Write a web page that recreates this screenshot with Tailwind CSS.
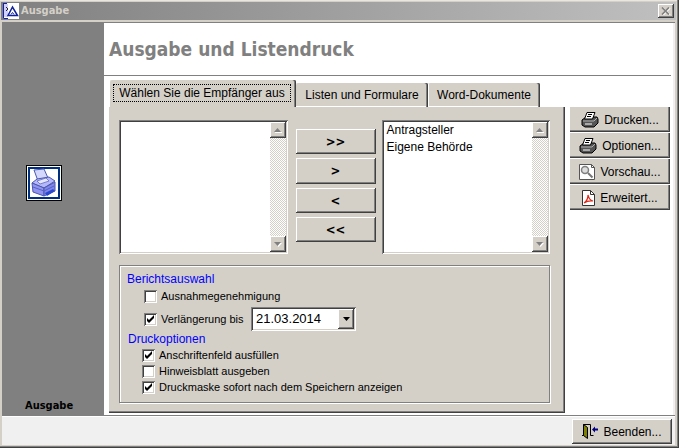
<!DOCTYPE html>
<html lang="de">
<head>
    <meta charset="UTF-8">
    <meta name="viewport" content="width=device-width, initial-scale=1.0">
    <title>Ausgabe</title>
    <script src="https://cdn.jsdelivr.net/npm/@tailwindcss/browser@4"></script>
</head>
<body class="font-['Liberation_Sans',Arial,sans-serif] text-[12px] leading-4 text-black">
    <div class="min-h-screen flex flex-col bg-[#d4d0c8] pt-0.5 pl-px pr-[3px] pb-[3px] shadow-[inset_-1px_-1px_#404040,inset_-2px_-2px_#808080,inset_0_1px_#e8e6e0]">

        <!-- Titelleiste -->
        <div class="h-[18px] flex items-center bg-linear-to-r from-[#808080] to-[#c0c0c0] pl-0.5 pr-0.5">
            <svg class="size-4 shrink-0" viewBox="0 0 16 16">
                <path d="M0 0h16v16H0z" fill="#fff"/>
                <path d="M1 1h4v13H1z" fill="#d0d0ff"/>
                <path d="M.5 0v15.500H5M0 .5h4" fill="none" stroke="#1020b0"/>
                <path d="M3 4l2 2-2 2" fill="none" stroke="#222"/>
                <path d="M5 12.500L9.500 4l5 8.500z" fill="none" stroke="#10209c" stroke-width="1.500"/>
                <path d="M8 11.500l1.500-2 1.500 2" fill="none" stroke="#10209c"/>
            </svg>
            <span class="flex-1 pl-0.5 font-['DejaVu_Sans_Condensed','DejaVu_Sans',sans-serif] font-bold text-[11px] text-[#d4d0c8]">Ausgabe</span>
            <button aria-label="Schließen" class="w-4 h-3.5 grid place-items-center bg-[#d4d0c8] shadow-[inset_-1px_-1px_#404040,inset_1px_1px_#fff,inset_-2px_-2px_#808080]">
                <svg class="w-2.5 h-2" viewBox="0 0 10 8">
                    <path d="M2 1l7 7M9 1L2 8" stroke="#fff" stroke-width="1.500"/>
                    <path d="M1 .5l7 7M8 .5l-7 7" stroke="#808080" stroke-width="1.700"/>
                </svg>
            </button>
        </div>

        <div class="flex-1 flex flex-col mt-0.5 ml-px mr-px bg-[#f0f0f0] border-t border-[#808080]">
            <div class="flex-1 flex">
                <!-- Seitenleiste -->
                <aside class="w-[102px] shrink-0 flex flex-col items-start pl-6 bg-[#808080] pt-[142px] pb-px">
                    <svg class="size-9" viewBox="0 0 36 36">
                        <path d="M0 0h36v36H0z" fill="#000"/>
                        <path d="M1 1h34v34H1z" fill="#fff"/>
                        <path d="M2 2h32v32H2z" fill="#003080"/>
                        <path d="M4 4h28v28H4z" fill="#fff"/>
                        <path d="M8 5l10-1 4 9-10 3z" fill="#d4d8ff" stroke="#4a58ac"/>
                        <path d="M6 18l5-4 12-2 6 4-11 7z" fill="#b4b8fa" stroke="#4a58ac"/>
                        <path d="M11 16l9-3 3 3-9 3z" fill="#e4e6ff" stroke="#5360b4" stroke-width=".7"/>
                        <path d="M6 18l12 5v8L7 27z" fill="#8f94f0" stroke="#4a58ac"/>
                        <path d="M18 23l11-6v9l-11 5z" fill="#7f85ea" stroke="#4a58ac"/>
                        <path d="M19 28l8-4 2 2-8 5z" fill="#2848d0"/>
                        <path d="M7 22l11 4 10-5" fill="none" stroke="#5562c4"/>
                    </svg>
                    <span class="mt-auto -ml-px font-['DejaVu_Sans_Condensed','DejaVu_Sans',sans-serif] font-bold text-[11px]">Ausgabe</span>
                </aside>

                <main class="flex-1 flex flex-col bg-white mr-0.5 pr-0.5">
                    <h1 class="h-[53px] flex items-center pl-[5px] border-b border-[#808080] font-['DejaVu_Sans_Condensed','DejaVu_Sans',sans-serif] font-bold text-[19px] text-[#808080]">Ausgabe und Listendruck</h1>

                    <div class="flex-1 flex gap-[5px] pl-[5px] pt-1 pb-0.5">
                        <div class="flex-1 flex flex-col">
                            <!-- Register -->
                            <div role="tablist" class="flex items-end pl-px">
                                <button role="tab" aria-selected="true" class="w-[186px] h-[27px] pl-[3px] pr-[5px] flex items-start pt-1 bg-[#d4d0c8] rounded-t-xs shadow-[inset_-1px_0_#404040,inset_-2px_0_#808080]"><span class="flex-1 border border-dotted border-black whitespace-nowrap">Wählen Sie die Empfänger aus</span></button>
                                <button role="tab" aria-selected="false" class="w-[132px] h-6 bg-[#d4d0c8] rounded-t-xs whitespace-nowrap shadow-[inset_-1px_0_#404040,inset_-2px_0_#808080,inset_0_-1px_#fff]">Listen und Formulare</button>
                                <button role="tab" aria-selected="false" class="w-28 h-6 bg-[#d4d0c8] rounded-t-xs whitespace-nowrap shadow-[inset_-1px_0_#404040,inset_-2px_0_#808080,inset_1px_-1px_#fff]">Word-Dokumente</button>
                            </div>

                            <div role="tabpanel" class="flex-1 flex flex-col bg-[#d4d0c8] pt-[13px] pl-2.5 pr-[15px] pb-2.5 shadow-[inset_-1px_-1px_#404040,inset_-2px_-2px_#808080]">
                                <div class="flex h-[134px]">
                                    <div class="flex-1 flex p-0.5 bg-white shadow-[inset_1px_1px_#808080,inset_-1px_-1px_#fff,inset_2px_2px_#404040,inset_-2px_-2px_#d4d0c8]">
                                        <select multiple aria-label="Verfügbare Empfänger" class="flex-1 min-w-0 overflow-hidden outline-none bg-white"></select>
                                        <div class="w-4 flex flex-col justify-between bg-[repeating-conic-gradient(#fff_0_25%,#d4d0c8_0_50%)] bg-size-[2px_2px]">
                                            <button aria-label="Nach oben" class="size-4 grid place-items-center bg-[#d4d0c8] shadow-[inset_-1px_-1px_#404040,inset_1px_1px_#fff,inset_-2px_-2px_#808080]"><svg class="w-2 h-[5px]" viewBox="0 0 8 5"><path d="M1 4h7v1H1z" fill="#fff"/><path d="M0 4l3.500-4L7 4z" fill="#808080"/></svg></button>
                                            <button aria-label="Nach unten" class="size-4 grid place-items-center bg-[#d4d0c8] shadow-[inset_-1px_-1px_#404040,inset_1px_1px_#fff,inset_-2px_-2px_#808080]"><svg class="w-2 h-[5px]" viewBox="0 0 8 5"><path d="M1 1h7L4.500 5z" fill="#fff"/><path d="M0 0h7L3.500 4z" fill="#808080"/></svg></button>
                                        </div>
                                    </div>
                                    <div class="w-20 flex flex-col gap-1 ml-2 mr-1.5 pt-[9px] font-['DejaVu_Sans_Condensed','DejaVu_Sans',sans-serif] font-bold text-[13px]">
                                        <button class="h-[25px] shadow-[inset_-1px_-1px_#404040,inset_1px_1px_#fff,inset_-2px_-2px_#808080]">&gt;&gt;</button>
                                        <button class="h-[26px] shadow-[inset_-1px_-1px_#404040,inset_1px_1px_#fff,inset_-2px_-2px_#808080]">&gt;</button>
                                        <button class="h-[25px] shadow-[inset_-1px_-1px_#404040,inset_1px_1px_#fff,inset_-2px_-2px_#808080]">&lt;</button>
                                        <button class="h-[25px] shadow-[inset_-1px_-1px_#404040,inset_1px_1px_#fff,inset_-2px_-2px_#808080]">&lt;&lt;</button>
                                    </div>
                                    <div class="flex-1 flex p-0.5 bg-white shadow-[inset_1px_1px_#808080,inset_-1px_-1px_#fff,inset_2px_2px_#404040,inset_-2px_-2px_#d4d0c8]">
                                        <select multiple aria-label="Gewählte Empfänger" class="flex-1 min-w-0 overflow-hidden outline-none bg-white">
                                            <option class="h-[17px] p-0 pl-[3px] pt-px">Antragsteller</option>
                                            <option class="h-[17px] p-0 pl-[3px] pt-px">Eigene Behörde</option>
                                        </select>
                                        <div class="w-4 flex flex-col justify-between bg-[repeating-conic-gradient(#fff_0_25%,#d4d0c8_0_50%)] bg-size-[2px_2px]">
                                            <button aria-label="Nach oben" class="size-4 grid place-items-center bg-[#d4d0c8] shadow-[inset_-1px_-1px_#404040,inset_1px_1px_#fff,inset_-2px_-2px_#808080]"><svg class="w-2 h-[5px]" viewBox="0 0 8 5"><path d="M1 4h7v1H1z" fill="#fff"/><path d="M0 4l3.500-4L7 4z" fill="#808080"/></svg></button>
                                            <button aria-label="Nach unten" class="size-4 grid place-items-center bg-[#d4d0c8] shadow-[inset_-1px_-1px_#404040,inset_1px_1px_#fff,inset_-2px_-2px_#808080]"><svg class="w-2 h-[5px]" viewBox="0 0 8 5"><path d="M1 1h7L4.500 5z" fill="#fff"/><path d="M0 0h7L3.500 4z" fill="#808080"/></svg></button>
                                        </div>
                                    </div>
                                </div>

                                <!-- Optionen -->
                                <div class="flex-1 mt-[11px] pl-[7px] pt-[5px] border border-[#808080] shadow-[1px_1px_#fff,inset_1px_1px_#fff] text-[11px]">
                                    <h2 class="text-[12px] text-[#0000ff]">Berichtsauswahl</h2>
                                    <div class="h-[18px] flex items-center gap-1 pl-[17px]">
                                        <span class="grid size-[13px]">
                                            <input type="checkbox" id="ausnahme" class="peer appearance-none col-start-1 row-start-1 size-[13px] bg-white shadow-[inset_1px_1px_#808080,inset_-1px_-1px_#fff,inset_2px_2px_#404040,inset_-2px_-2px_#d4d0c8]">
                                            <svg class="hidden peer-checked:block pointer-events-none col-start-1 row-start-1 size-[13px]" viewBox="0 0 13 13"><path d="M3 5v3l2 2 5-5V2L5 7z"/></svg>
                                        </span>
                                        <label for="ausnahme">Ausnahmegenehmigung</label>
                                    </div>
                                    <div class="h-[26px] flex items-center gap-1 pl-[17px] pt-0.5">
                                        <span class="grid size-[13px]">
                                            <input type="checkbox" id="verlaengerung" checked class="peer appearance-none col-start-1 row-start-1 size-[13px] bg-white shadow-[inset_1px_1px_#808080,inset_-1px_-1px_#fff,inset_2px_2px_#404040,inset_-2px_-2px_#d4d0c8]">
                                            <svg class="hidden peer-checked:block pointer-events-none col-start-1 row-start-1 size-[13px]" viewBox="0 0 13 13"><path d="M3 5v3l2 2 5-5V2L5 7z"/></svg>
                                        </span>
                                        <label for="verlaengerung" class="w-[86px]">Verlängerung bis</label>
                                        <div class="grid w-[105px] h-6 items-center">
                                            <select aria-label="Datum" class="appearance-none col-start-1 row-start-1 w-full h-6 pl-[5px] bg-white outline-none text-[13px] shadow-[inset_1px_1px_#808080,inset_-1px_-1px_#fff,inset_2px_2px_#404040,inset_-2px_-2px_#d4d0c8]">
                                                <option>21.03.2014</option>
                                            </select>
                                            <span class="pointer-events-none col-start-1 row-start-1 justify-self-end mr-0.5 w-4 h-5 grid place-items-center bg-[#d4d0c8] shadow-[inset_-1px_-1px_#404040,inset_1px_1px_#fff,inset_-2px_-2px_#808080]"><svg class="w-[7px] h-1" viewBox="0 0 7 4"><path d="M0 0h7L3.500 4z"/></svg></span>
                                        </div>
                                    </div>
                                    <h2 class="pl-px text-[12px] text-[#0000ff]">Druckoptionen</h2>
                                    <div class="h-4 flex items-center gap-1 pl-[15px]">
                                        <span class="grid size-[13px]">
                                            <input type="checkbox" id="anschrift" checked class="peer appearance-none col-start-1 row-start-1 size-[13px] bg-white shadow-[inset_1px_1px_#808080,inset_-1px_-1px_#fff,inset_2px_2px_#404040,inset_-2px_-2px_#d4d0c8]">
                                            <svg class="hidden peer-checked:block pointer-events-none col-start-1 row-start-1 size-[13px]" viewBox="0 0 13 13"><path d="M3 5v3l2 2 5-5V2L5 7z"/></svg>
                                        </span>
                                        <label for="anschrift">Anschriftenfeld ausfüllen</label>
                                    </div>
                                    <div class="h-4 flex items-center gap-1 pl-[15px]">
                                        <span class="grid size-[13px]">
                                            <input type="checkbox" id="hinweis" class="peer appearance-none col-start-1 row-start-1 size-[13px] bg-white shadow-[inset_1px_1px_#808080,inset_-1px_-1px_#fff,inset_2px_2px_#404040,inset_-2px_-2px_#d4d0c8]">
                                            <svg class="hidden peer-checked:block pointer-events-none col-start-1 row-start-1 size-[13px]" viewBox="0 0 13 13"><path d="M3 5v3l2 2 5-5V2L5 7z"/></svg>
                                        </span>
                                        <label for="hinweis">Hinweisblatt ausgeben</label>
                                    </div>
                                    <div class="h-4 flex items-center gap-1 pl-[15px]">
                                        <span class="grid size-[13px]">
                                            <input type="checkbox" id="druckmaske" checked class="peer appearance-none col-start-1 row-start-1 size-[13px] bg-white shadow-[inset_1px_1px_#808080,inset_-1px_-1px_#fff,inset_2px_2px_#404040,inset_-2px_-2px_#d4d0c8]">
                                            <svg class="hidden peer-checked:block pointer-events-none col-start-1 row-start-1 size-[13px]" viewBox="0 0 13 13"><path d="M3 5v3l2 2 5-5V2L5 7z"/></svg>
                                        </span>
                                        <label for="druckmaske">Druckmaske sofort nach dem Speichern anzeigen</label>
                                    </div>
                                </div>
                            </div>
                        </div>

                        <!-- Aktionen -->
                        <div class="w-[100px] flex flex-col gap-px pt-[27px] mr-px">
                            <button class="h-[25px] flex items-center justify-center gap-[5px] bg-[#d4d0c8] shadow-[inset_-1px_-1px_#404040,inset_-2px_-2px_#808080]">
                                <svg class="w-[18px] h-4" viewBox="0 0 18 16">
                                    <path d="M1 8l4-3h11l1 2v4l-4 4H4l-3-2z" fill="#555" stroke="#000"/>
                                    <path d="M6 .5h8L11.500 7H3.500z" fill="#fff" stroke="#000"/>
                                    <path d="M7 2.500h4M6 4.500h4" stroke="#000"/>
                                    <path d="M2 9h11l3-3" fill="none" stroke="#b0b0b0"/>
                                    <path d="M4 12h7" stroke="#fff"/>
                                </svg>
                                Drucken...
                            </button>
                            <button class="h-[25px] flex items-center justify-center gap-[5px] bg-[#d4d0c8] shadow-[inset_-1px_-1px_#404040,inset_-2px_-2px_#808080]">
                                <svg class="w-[18px] h-4" viewBox="0 0 18 16">
                                    <path d="M1 8l4-3h11l1 2v4l-4 4H4l-3-2z" fill="#555" stroke="#000"/>
                                    <path d="M6 .5h8L11.500 7H3.500z" fill="#fff" stroke="#000"/>
                                    <path d="M7 2.500h4M6 4.500h4" stroke="#000"/>
                                    <path d="M2 9h11l3-3" fill="none" stroke="#b0b0b0"/>
                                    <path d="M4 12h7" stroke="#fff"/>
                                </svg>
                                Optionen...
                            </button>
                            <button class="h-[25px] flex items-center justify-center gap-[5px] bg-[#d4d0c8] shadow-[inset_-1px_-1px_#404040,inset_-2px_-2px_#808080]">
                                <svg class="size-4" viewBox="0 0 16 16">
                                    <path d="M.5.5h12l3 3v12H.5z" fill="#fff" stroke="#555"/>
                                    <path d="M12.500.5v3h3" fill="none" stroke="#555"/>
                                    <circle cx="6" cy="6" r="3.500" fill="#ddd" stroke="#808080" stroke-width="1.500"/>
                                    <path d="M9 9l4.500 4.500" stroke="#777" stroke-width="2"/>
                                </svg>
                                Vorschau...
                            </button>
                            <button class="h-[25px] flex items-center justify-center gap-[5px] bg-[#d4d0c8] shadow-[inset_-1px_-1px_#404040,inset_-2px_-2px_#808080]">
                                <svg class="w-[13px] h-4" viewBox="0 0 13 16">
                                    <path d="M.5.5h8l4 4v11H.5z" fill="#fff" stroke="#333"/>
                                    <path d="M8.500.5v4h4" fill="none" stroke="#333"/>
                                    <path d="M2 13c3-2 4-5 4-8 1 4 2 5 5 6-3-.5-6 0-9 2z" fill="none" stroke="#e02818" stroke-width="1.200"/>
                                </svg>
                                Erweitert...
                            </button>
                        </div>
                    </div>
                </main>
            </div>

            <!-- Fußzeile -->
            <footer class="h-[30px] flex justify-end items-end pr-[3px] pb-px border-t border-[#808080] shadow-[inset_0_1px_#fff]">
                <button class="w-[100px] h-[25px] flex items-center justify-center gap-[5px] bg-[#d4d0c8] shadow-[inset_-1px_-1px_#404040,inset_1px_1px_#fff,inset_-2px_-2px_#808080]">
                    <svg class="w-4 h-[15px]" viewBox="0 0 16 15">
                        <path d="M0 11.500h2M1.500 12V.5h7v11h3" fill="none" stroke="#000"/>
                        <path d="M1.500.5l4 3v11l-4-3z" fill="#808000" stroke="#000"/>
                        <path d="M10 5.500l3-3v2h3v2h-3v2z" fill="#000080"/>
                    </svg>
                    Beenden...
                </button>
            </footer>
        </div>
    </div>
</body>
</html>
